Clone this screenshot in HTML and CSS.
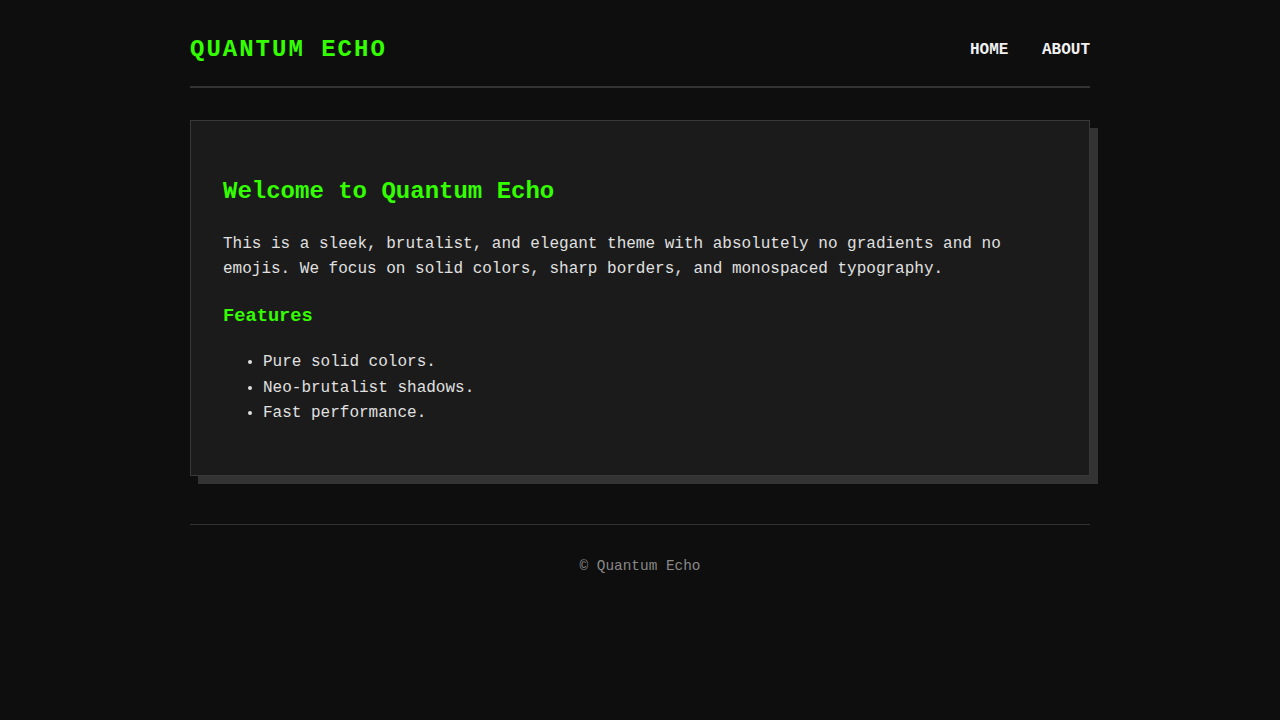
FILE: index.html
```html
<!DOCTYPE html>
<html lang="en">
<head>
<meta charset="utf-8">
<title>Quantum Echo</title>
<link rel="stylesheet" href="styles.css">
</head>
<body>
<div class="container">
  <header class="site-header">
    <div class="logo">QUANTUM ECHO</div>
    <nav class="nav">
      <a href="#" class="nav-link">HOME</a>
      <a href="#" class="nav-link">ABOUT</a>
    </nav>
  </header>
  <main class="card">
    <h2 class="card-title">Welcome to Quantum Echo</h2>
    <p class="card-text">This is a sleek, brutalist, and elegant theme with absolutely no gradients and no emojis. We focus on solid colors, sharp borders, and monospaced typography.</p>
    <h3 class="card-subtitle">Features</h3>
    <ul class="feature-list">
      <li>Pure solid colors.</li>
      <li>Neo-brutalist shadows.</li>
      <li>Fast performance.</li>
    </ul>
  </main>
  <footer class="site-footer">© Quantum Echo</footer>
</div>
</body>
</html>
```
FILE: styles.css
```css
html, body {
  margin: 0;
  padding: 0;
  background: #0e0e0e;
  color: #e0e0e0;
  font-family: "Liberation Mono", "Courier New", monospace;
  font-size: 16px;
  line-height: 1.6;
}
.container {
  width: 900px;
  margin: 0 auto;
}
.site-header {
  display: flex;
  justify-content: space-between;
  align-items: center;
  padding: 31px 0 17px;
  border-bottom: 2px solid #333;
}
.logo {
  color: #33ff00;
  font-weight: bold;
  font-size: 24px;
  letter-spacing: 2px;
}
.nav {
  display: flex;
  gap: 33.6px;
  padding-top: 2px;
}
.nav-link {
  color: #f0f0f0;
  font-weight: bold;
  text-decoration: none;
}
.card {
  display: block;
  margin-top: 32px;
  background: #1b1b1b;
  border: 1px solid #383838;
  padding: 32px;
  box-shadow: 8px 8px 0 #333;
}
.card-title {
  color: #33ff00;
  font-size: 24px;
  margin: 0.83em 0;
}
.card-text {
  margin: 1em 0;
}
.card-subtitle {
  color: #33ff00;
  font-size: 1.17em;
  margin: 1em 0;
}
.feature-list {
  margin: 1em 0;
  padding-left: 40px;
}
.site-footer {
  margin-top: 48px;
  border-top: 1px solid #333;
  padding-top: 30px;
  text-align: center;
  color: #888;
  font-size: 0.9rem;
}
```
